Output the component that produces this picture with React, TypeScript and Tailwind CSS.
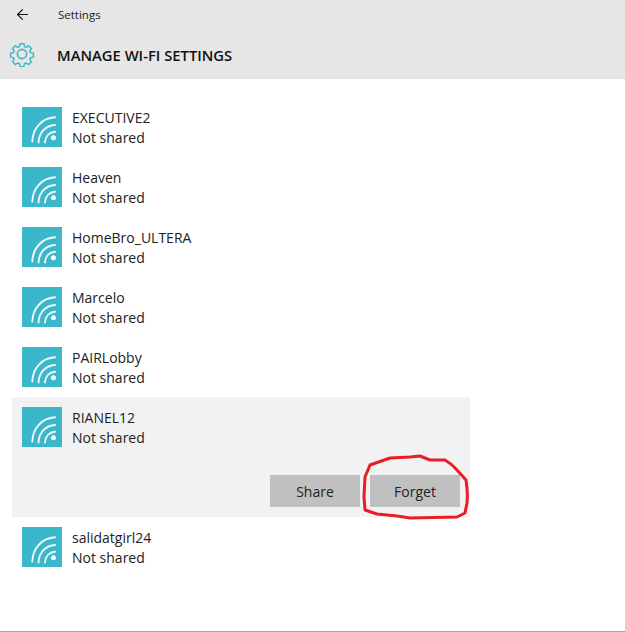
import React from 'react';
import { ArrowLeft } from 'lucide-react';

const networks = ['EXECUTIVE2', 'Heaven', 'HomeBro_ULTERA', 'Marcelo', 'PAIRLobby', 'RIANEL12', 'salidatgirl24'];

const GearIcon = () => (
  <svg width="26" height="26" viewBox="0 0 26 26" fill="none" stroke="#3ab7cb" strokeWidth="1.6" strokeLinejoin="round">
    <path d="M10.8 1.6h4.4l.6 3.2 1.9.8 2.7-1.8 3.1 3.1-1.8 2.7.8 1.9 3.2.6v4.4l-3.2.6-.8 1.9 1.8 2.7-3.1 3.1-2.7-1.8-1.9.8-.6 3.2h-4.4l-.6-3.2-1.9-.8-2.7 1.8-3.1-3.1 1.8-2.7-.8-1.9-3.2-.6v-4.4l3.2-.6.8-1.9-1.8-2.7 3.1-3.1 2.7 1.8 1.9-.8z" transform="translate(1.3 1.3) scale(0.9)" />
    <circle cx="13" cy="13" r="4.6" />
  </svg>
);

const WifiTile = () => (
  <div className="w-10 h-10 bg-[#3ab7cb] flex items-center justify-center shrink-0">
    <svg width="40" height="40" viewBox="0 0 40 40" fill="none" stroke="#ffffff" strokeWidth="1.9" strokeLinecap="round">
      <path d="M10.3 34.5C10.8 21 20 11 33 10.3" opacity="0.92" />
      <path d="M16.5 35.5C17 25.5 23.5 18.5 33 18" opacity="0.92" />
      <path d="M23 35.5C23.3 29.5 27 25.3 33 24.8" opacity="0.92" />
      <circle cx="31.4" cy="30.8" r="2.5" fill="#ffffff" stroke="none" />
    </svg>
  </div>
);

const ActionButton = ({ label }: { label: string }) => (
  <button className="w-[90px] h-8 bg-[#c0c0c0] text-[14px] text-[#222222]">{label}</button>
);

export default function App() {
  return (
    <div className="relative w-[625px] h-[632px] bg-white border-b border-[#76b5c8] overflow-hidden font-['Open_Sans','Noto_Sans',sans-serif]">
      <header className="h-[79px] bg-[#e6e6e6] flex flex-col">
        <div className="h-[30px] flex items-center">
          <ArrowLeft size={17} strokeWidth={1.5} className="ml-[14px] text-[#111111]" />
          <span className="ml-[27px] text-[11.5px] text-[#222222]">Settings</span>
        </div>
        <div className="flex items-center h-[50px]">
          <div className="ml-[9px]"><GearIcon /></div>
          <h1 className="ml-[22px] pt-[1px] text-[14.8px] font-semibold text-[#111111]">MANAGE WI-FI SETTINGS</h1>
        </div>
      </header>

      <main className="pt-[18px] pl-3 w-[470px]">
        {networks.map((name) => {
          const selected = name === 'RIANEL12';
          return (
            <div key={name} className={selected ? 'bg-[#f2f2f2] h-[120px] pt-[10px] px-[10px]' : 'h-[60px] pt-[10px] px-[10px]'}>
              <div className="flex gap-[10px]">
                <WifiTile />
                <div className="text-[14px] leading-5 text-[#222222] mt-[1px]">
                  <div>{name}</div>
                  <div>Not shared</div>
                </div>
              </div>
              {selected && (
                <div className="flex justify-end gap-[10px] mt-[27px]">
                  <ActionButton label="Share" />
                  <ActionButton label="Forget" />
                </div>
              )}
            </div>
          );
        })}
      </main>

      {/* red marker scribble round the Forget button */}
      <svg className="absolute inset-0 pointer-events-none" width="625" height="632" fill="none">
        <path
          d="M420 456 L430 460 L445 460 Q452 464 457 470 L466 480 Q468 492 467 503 L465 513 L457 517 L410 518 L397 516 L377 514 L365 510 L364 497 L365 477 L370 465 L390 458 L410 457 Z"
          stroke="#ed1c24"
          strokeWidth="3"
          strokeLinejoin="round"
        />
      </svg>
    </div>
  );
}
